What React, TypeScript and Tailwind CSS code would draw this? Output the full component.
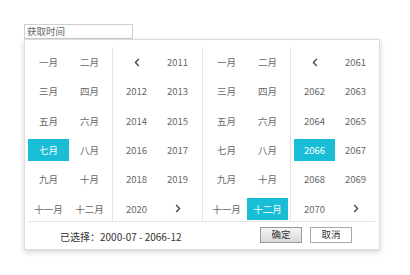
import React from "react";

const months = ["一月", "二月", "三月", "四月", "五月", "六月", "七月", "八月", "九月", "十月", "十一月", "十二月"];

function Chevron({ dir }: { dir: "left" | "right" }) {
  return (
    <svg width="6" height="9" viewBox="0 0 6 9" fill="none">
      <path
        d={dir === "left" ? "M4.8 1 L1.4 4.5 L4.8 8" : "M1.2 1 L4.6 4.5 L1.2 8"}
        stroke="#444"
        strokeWidth="1.3"
      />
    </svg>
  );
}

function Cell({ children, active }: { children: React.ReactNode; active?: boolean }) {
  return (
    <div
      className={
        "flex h-[22px] w-[41px] items-center justify-center text-[9.5px] " +
        (active ? "bg-[#19bdd6] text-white" : "text-[#666]")
      }
    >
      {children}
    </div>
  );
}

function MonthPanel({ active, className }: { active: number; className: string }) {
  return (
    <div className={className}>
      <div className="grid grid-cols-[41px_41px] gap-y-[7.35px] pl-[3px] pt-[4px]">
        {months.map((m, i) => (
          <Cell key={m} active={i === active}>
            {m}
          </Cell>
        ))}
      </div>
    </div>
  );
}

function YearPanel({ start, active, className }: { start: number; active?: number; className: string }) {
  const years = Array.from({ length: 10 }, (_, i) => start + i);
  return (
    <div className={className}>
      <div className="grid grid-cols-[41px_41px] gap-y-[7.35px] pl-[3px] pt-[4px]">
        <Cell>
          <Chevron dir="left" />
        </Cell>
        {years.map((y) => (
          <Cell key={y} active={y === active}>
            {y}
          </Cell>
        ))}
        <Cell>
          <Chevron dir="right" />
        </Cell>
      </div>
    </div>
  );
}

export default function App() {
  return (
    <div className="min-h-screen bg-white pl-[24px] pt-[24px] font-['Noto_Sans_CJK_SC','Noto_Sans',sans-serif]">
      <div className="flex h-[15px] w-[109px] items-center border border-[#cfcfcf] bg-white pl-[2px] text-[9.5px] leading-none text-[#666]">
        获取时间
      </div>
      <div className="w-[356px] border border-[#dcdcdc] bg-white shadow-[0_2px_6px_rgba(0,0,0,0.18)]">
        <div className="mt-[7px] flex">
          <MonthPanel active={6} className="w-[88px] border-r border-[#e4e4e4]" />
          <YearPanel start={2011} className="w-[90px] border-r border-[#e4e4e4]" />
          <MonthPanel active={11} className="w-[88px] border-r border-[#e4e4e4]" />
          <YearPanel start={2061} active={2066} className="flex-1" />
        </div>
        <div className="ml-[3px] mr-[4px] mt-[1px] h-px bg-[#e4e4e4]" />
        <div className="flex h-[27px] items-center pl-[35px] pr-[27px]">
          <span className="pt-[3px] text-[10px] text-[#333]">已选择：2000-07 - 2066-12</span>
          <div className="ml-auto flex gap-[8px]">
            <button className="h-[16px] w-[42px] border border-[#9a9a9a] bg-gradient-to-b from-[#f4f4f4] to-[#dadada] text-[9.5px] leading-none text-[#333]">
              确定
            </button>
            <button className="h-[16px] w-[42px] border border-[#a8a8a8] bg-white text-[9.5px] leading-none text-[#333]">
              取消
            </button>
          </div>
        </div>
      </div>
    </div>
  );
}
